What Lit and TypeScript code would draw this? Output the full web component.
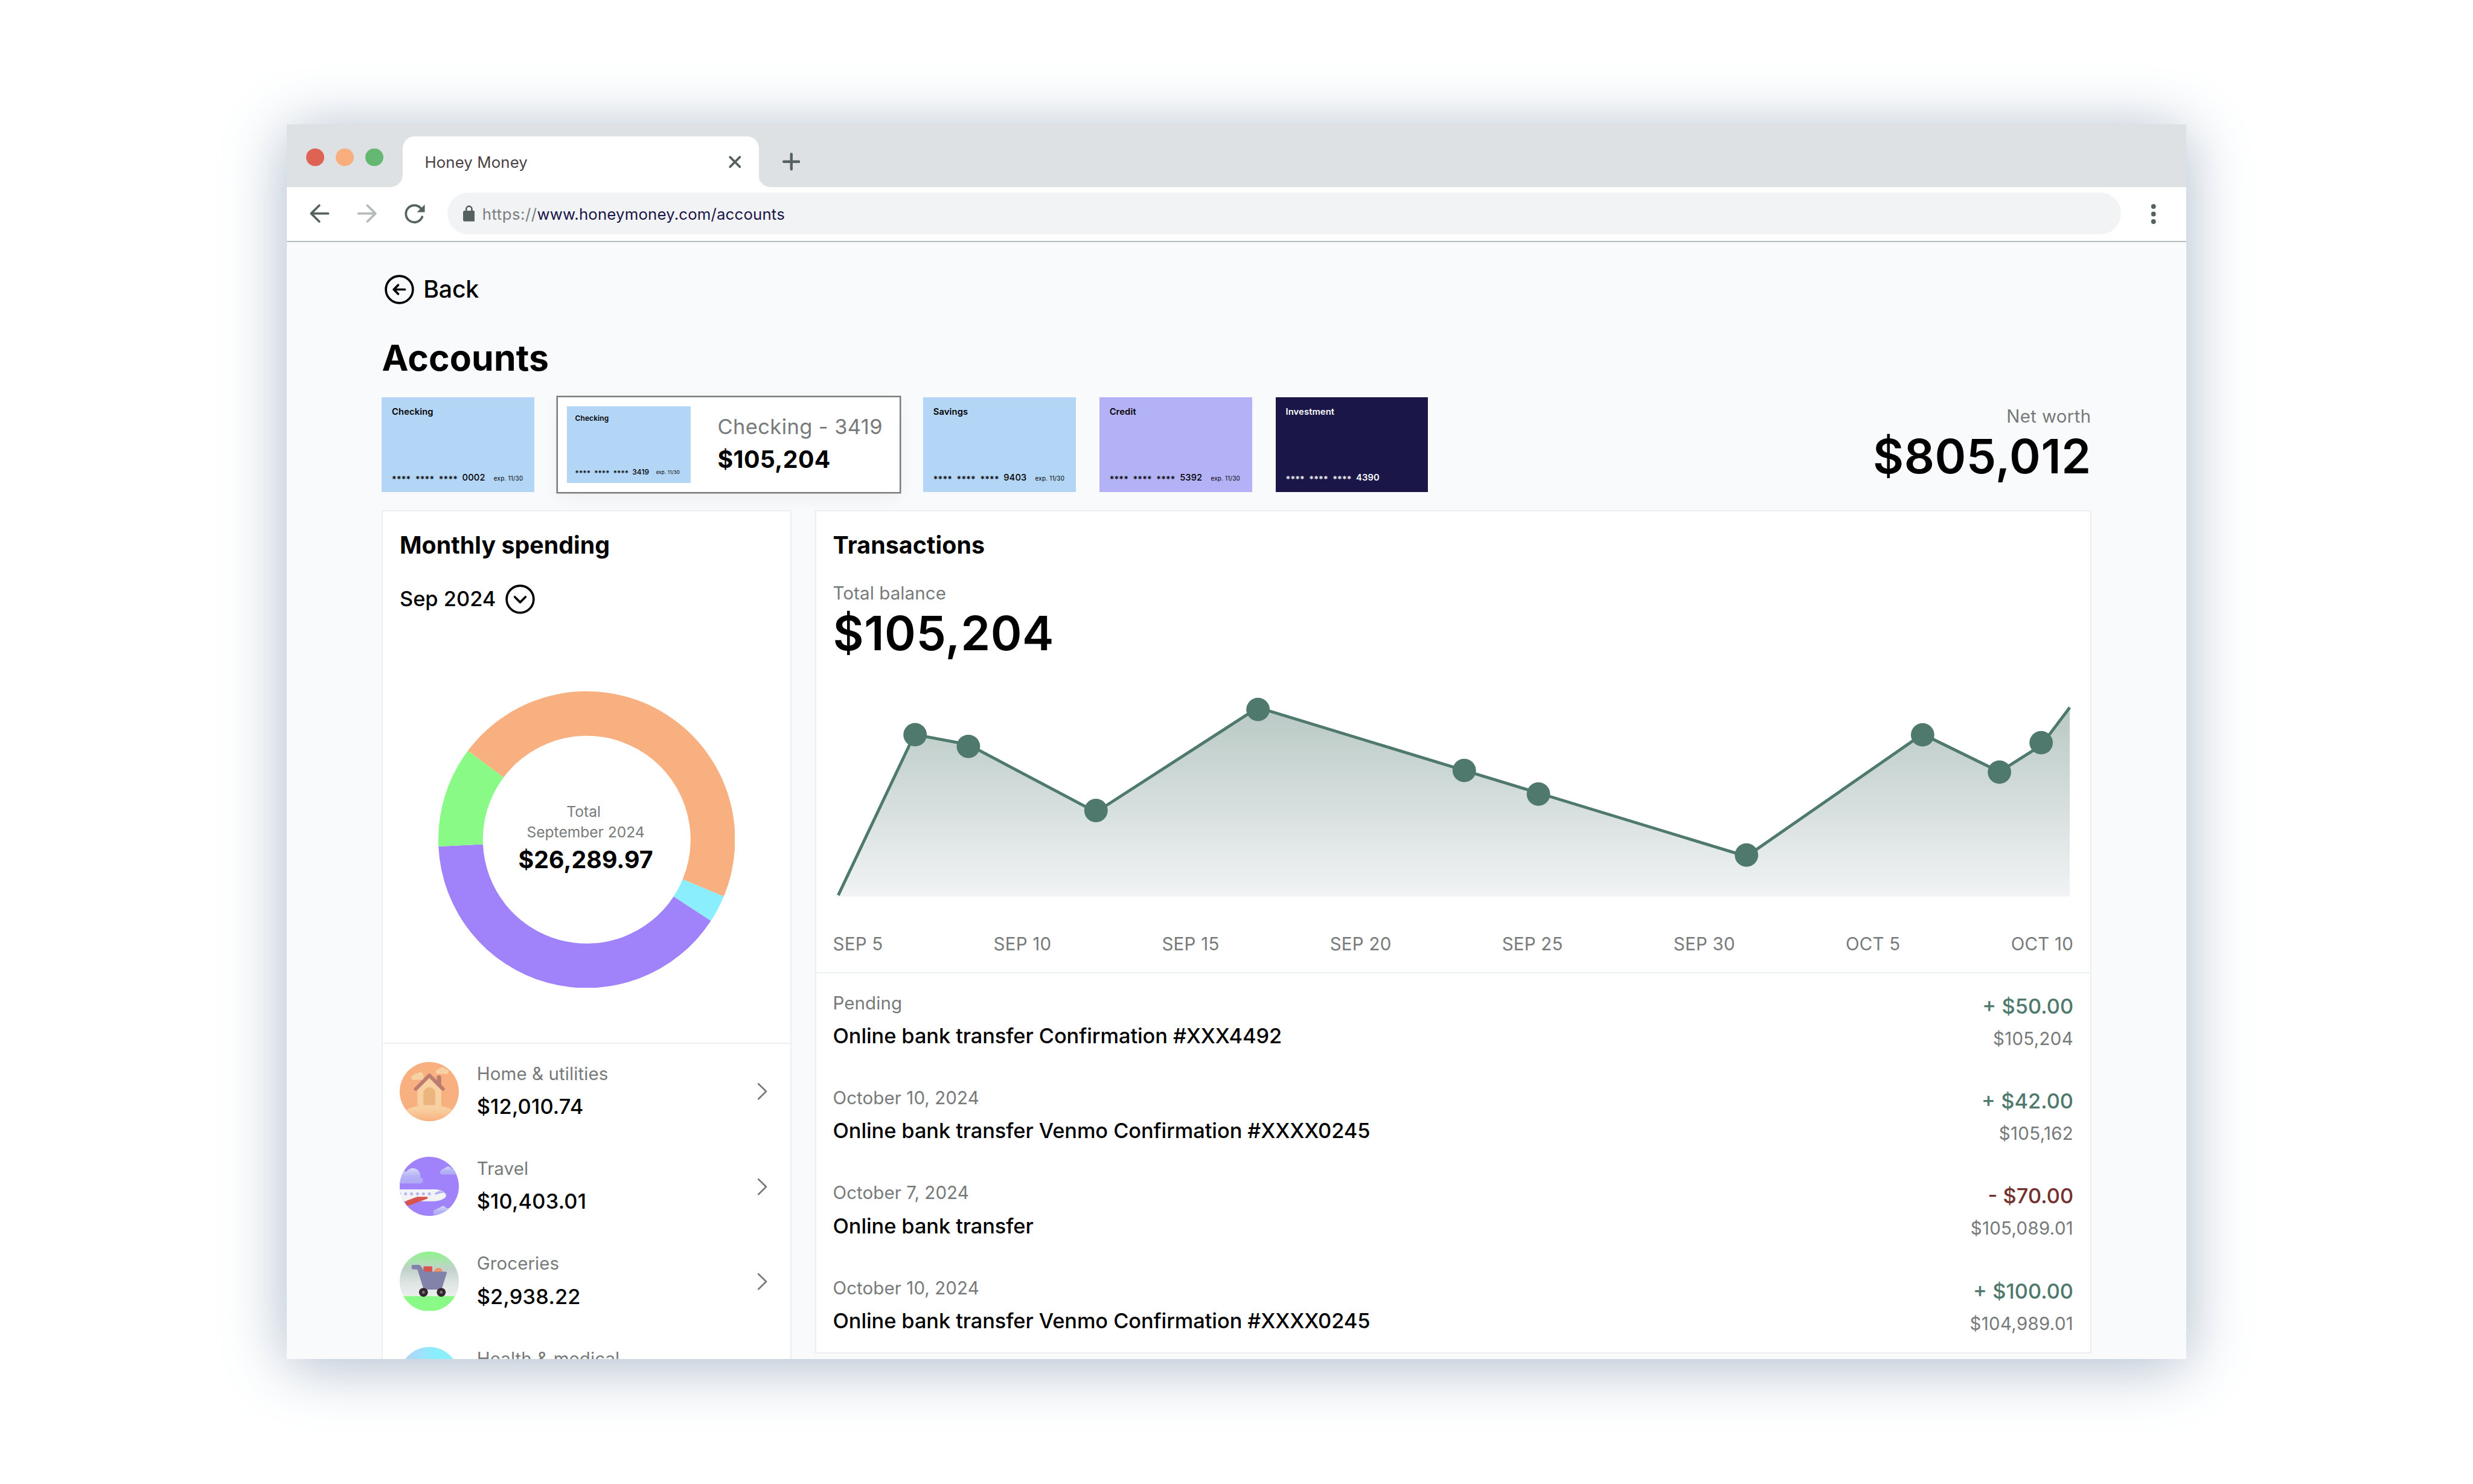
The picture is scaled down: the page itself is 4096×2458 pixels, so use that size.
import { LitElement, html, svg, css } from "lit";
import { customElement, property } from "lit/decorators.js";
import { classMap } from "lit/directives/class-map.js";

interface Account {
  name: string;
  digits: string;
  exp?: string;
  tone: "sky" | "lilac" | "navy";
  selected?: boolean;
  balance?: string;
}

interface Category {
  name: string;
  amount?: string;
  art: "home" | "travel" | "groceries" | "health";
}

interface Transaction {
  date: string;
  title: string;
  amount: string;
  balance: string;
  debit?: boolean;
}

const ACCOUNTS: Account[] = [
  { name: "Checking", digits: "0002", exp: "11/30", tone: "sky" },
  { name: "Checking", digits: "3419", exp: "11/30", tone: "sky", selected: true, balance: "$105,204" },
  { name: "Savings", digits: "9403", exp: "11/30", tone: "sky" },
  { name: "Credit", digits: "5392", exp: "11/30", tone: "lilac" },
  { name: "Investment", digits: "4390", tone: "navy" },
];

const CATEGORIES: Category[] = [
  { name: "Home & utilities", amount: "$12,010.74", art: "home" },
  { name: "Travel", amount: "$10,403.01", art: "travel" },
  { name: "Groceries", amount: "$2,938.22", art: "groceries" },
  { name: "Health & medical", art: "health" },
];

const TRANSACTIONS: Transaction[] = [
  { date: "Pending", title: "Online bank transfer Confirmation #XXX4492", amount: "+ $50.00", balance: "$105,204" },
  { date: "October 10, 2024", title: "Online bank transfer Venmo Confirmation #XXXX0245", amount: "+ $42.00", balance: "$105,162" },
  { date: "October 7, 2024", title: "Online bank transfer", amount: "- $70.00", balance: "$105,089.01", debit: true },
  { date: "October 10, 2024", title: "Online bank transfer Venmo Confirmation #XXXX0245", amount: "+ $100.00", balance: "$104,989.01" },
];

const TICKS = ["SEP 5", "SEP 10", "SEP 15", "SEP 20", "SEP 25", "SEP 30", "OCT 5", "OCT 10"];

/* Ring segments: start and end angle in degrees, clockwise from the top. */
const SEGMENTS: [number, number, string][] = [
  [306.8, 472.5, "#f9b080"],
  [112.5, 123.2, "#8aeefc"],
  [123.2, 267.4, "#a083fa"],
  [267.4, 306.8, "#8afa86"],
];

const LINE: [number, number][] = [
  [3.4, 157.4], [54.8, 49], [91.1, 55.9], [177.1, 101.4], [286.3, 30.9],
  [615.5, 131.2], [734.2, 48.8], [786, 74.2], [814.1, 56.4], [833.4, 30.8],
];

const DOTS: [number, number][] = [
  [55.2, 49.2], [91.1, 57.1], [177.1, 100.3], [286.3, 32.2], [425.3, 73.3],
  [475.3, 89.2], [615.5, 130.3], [734.2, 49.3], [786, 74.4], [814.1, 54.6],
];

function ringSlice(from: number, to: number, outer: number, inner: number): string {
  const at = (deg: number, r: number) => {
    const a = (deg * Math.PI) / 180;
    return `${(100 + r * Math.sin(a)).toFixed(3)} ${(100 - r * Math.cos(a)).toFixed(3)}`;
  };
  const big = to - from > 180 ? 1 : 0;
  return `M${at(from, outer)}A${outer} ${outer} 0 ${big} 1 ${at(to, outer)}L${at(to, inner)}A${inner} ${inner} 0 ${big} 0 ${at(from, inner)}Z`;
}

@customElement("browser-bar")
export class BrowserBar extends LitElement {
  static styles = css`
    :host {
      display: block;
      color: #55625f;
    }
    svg {
      display: block;
    }
    .tabs {
      display: flex;
      height: 42px;
      background: #dee1e4;
    }
    .lights {
      display: flex;
      gap: 8px;
      padding: 16px 13px 0;
      width: 52px;
    }
    .light {
      width: 12px;
      height: 12px;
      border-radius: 50%;
    }
    .red {
      background: #df6354;
    }
    .amber {
      background: #f9ae7d;
    }
    .green {
      background: #64b872;
    }
    .tab {
      position: relative;
      display: flex;
      align-items: center;
      justify-content: space-between;
      box-sizing: border-box;
      width: 240px;
      height: 34px;
      margin-top: 8px;
      padding: 0 11px 0 14.9px;
      border-radius: 8px 8px 0 0;
      background: #fff;
    }
    .tab::before,
    .tab::after {
      content: "";
      position: absolute;
      bottom: 0;
      width: 8px;
      height: 8px;
    }
    .tab::before {
      left: -8px;
      background: radial-gradient(circle at 0 0, transparent 7.9px, #fff 8.1px);
    }
    .tab::after {
      right: -8px;
      background: radial-gradient(circle at 100% 0, transparent 7.9px, #fff 8.1px);
    }
    .title {
      padding-top: 0.3px;
      font-size: 10.5px;
      letter-spacing: 0.0045em;
      line-height: 16px;
      color: #4b4143;
    }
    .plus {
      padding: 19px 0 0 16px;
    }
    .toolbar {
      display: flex;
      align-items: flex-start;
      height: 36.2px;
      border-bottom: 0.9px solid #b5bfbc;
      background: #fff;
    }
    .nav {
      width: 108px;
      height: 36px;
    }
    .address {
      display: flex;
      align-items: center;
      gap: 5px;
      box-sizing: border-box;
      width: 1128px;
      height: 28px;
      margin-top: 4px;
      padding: 0 10.7px;
      border-radius: 14px;
      background: #f1f3f5;
    }
    .url {
      padding-top: 0.3px;
      font-size: 10.5px;
      letter-spacing: 0.006em;
      line-height: 16px;
      color: #1a1648;
    }
    .scheme {
      letter-spacing: 0.018em;
      color: #7b7e7e;
    }
    .more {
      padding: 11.4px 0 0 20.3px;
    }
  `;

  render() {
    return html`
      <div class="tabs">
        <div class="lights">
          <span class="light red"></span><span class="light amber"></span><span class="light green"></span>
        </div>
        <div class="tab">
          <span class="title">Honey Money</span>
          <svg width="10" height="10" viewBox="0 0 10 10" fill="none" stroke="currentColor" stroke-width="1.5" stroke-linecap="round">
            <path d="M1.7 1.7l6.6 6.6M8.3 1.7L1.7 8.3" />
          </svg>
        </div>
        <div class="plus">
          <svg width="12" height="12" viewBox="0 0 12 12" fill="none" stroke="currentColor" stroke-width="1.8" stroke-linecap="round">
            <path d="M6 0.9v10.2M0.9 6h10.2" />
          </svg>
        </div>
      </div>
      <div class="toolbar">
        <svg class="nav" viewBox="0 0 108 36" fill="none" stroke="currentColor" stroke-width="1.5" stroke-linecap="round" stroke-linejoin="round">
          <path d="M27.9 17.75H16.4M21.9 12.3L16.4 17.75L21.9 23.2" />
          <path stroke="#b5bbba" d="M48.3 17.75H59.8M54.3 12.3L59.8 17.75L54.3 23.2" />
          <path d="M91.3 20A5.7 5.7 0 1 1 90.6 14.6" />
          <path fill="currentColor" stroke="none" d="M93 11.7V16.9H87.7Z" />
        </svg>
        <div class="address">
          <svg width="8" height="11" viewBox="0 0 8 11">
            <path fill="none" stroke="currentColor" stroke-width="1.1" d="M2.1 4.2V2.6a1.9 1.9 0 0 1 3.8 0V4.2" />
            <rect y="3.7" width="8" height="7.2" rx="1" fill="currentColor" />
          </svg>
          <span class="url"><span class="scheme">https://</span>www.honeymoney.com/accounts</span>
        </div>
        <svg class="more" width="4" height="13.4" viewBox="0 0 4 13.4" fill="currentColor">
          <circle cx="1.6" cy="1.6" r="1.6" />
          <circle cx="1.6" cy="6.7" r="1.6" />
          <circle cx="1.6" cy="11.8" r="1.6" />
        </svg>
      </div>
    `;
  }
}

@customElement("bank-card")
export class BankCard extends LitElement {
  @property({ attribute: false }) account!: Account;
  @property({ type: Boolean, reflect: true }) small = false;

  static styles = css`
    :host {
      display: block;
      font-size: 6px;
    }
    :host([small]) {
      font-size: 4.875px;
    }
    .card {
      display: flex;
      flex-direction: column;
      justify-content: space-between;
      box-sizing: border-box;
      width: 17.13em;
      height: 10.667em;
      padding: 1.06em 1.13em 0.92em;
      font-weight: 500;
      color: #000;
    }
    .sky {
      background: #b3d5f6;
    }
    .lilac {
      background: #b4b2f6;
    }
    .navy {
      background: #1a1648;
      color: #fff;
    }
    .name {
      font-weight: 600;
      letter-spacing: 0.008em;
      line-height: 1.3em;
    }
    .number {
      display: flex;
      align-items: center;
      line-height: 1.3em;
      letter-spacing: 0.007em;
    }
    .mask {
      width: 2.6333em;
      padding-top: 0.36em;
      line-height: 0.94em;
      letter-spacing: 0.012em;
    }
    .navy .digits {
      font-weight: 600;
    }
    .exp {
      margin-left: 1.45em;
      padding-top: 0.1em;
      font-size: 0.6667em;
      font-weight: 400;
      line-height: 1.3em;
      letter-spacing: 0.022em;
    }
  `;

  render() {
    const a = this.account;
    return html`
      <div class="card ${a.tone}">
        <div class="name">${a.name}</div>
        <div class="number">
          <span class="mask">****</span><span class="mask">****</span><span class="mask">****</span>
          <span class="digits">${a.digits}</span>
          ${a.exp ? html`<span class="exp">exp. ${a.exp}</span>` : null}
        </div>
      </div>
    `;
  }
}

@customElement("category-art")
export class CategoryArt extends LitElement {
  @property() art: Category["art"] = "home";

  static styles = css`
    :host {
      display: block;
      width: 40px;
      height: 40px;
      border-radius: 50%;
      overflow: hidden;
    }
    svg {
      display: block;
    }
  `;

  private home() {
    return svg`
      <defs>
        <linearGradient id="hill" x1="0" y1="0" x2="0" y2="1">
          <stop offset="0.1" stop-color="#f8d1a2" /><stop offset="0.5" stop-color="#f9b080" />
        </linearGradient>
      </defs>
      <rect width="40" height="40" fill="#f9b080" />
      <path fill="#f8d1a2" d="M9.5 12a1.5 1.5 0 0 1-.3-3a2 2 0 0 1 2.6-1.2a2.3 2.3 0 0 1 4.2 1.2V12Z" />
      <path fill="#f8d1a2" d="M25.3 8a1.4 1.4 0 0 1 0-2.7a1.6 1.6 0 0 1 1.6-.8a2.2 2.2 0 0 1 3.9.5a1.5 1.5 0 0 1 1 3Z" />
      <path fill="#bd7c70" d="M25 16V10.5a1.5 1.5 0 0 1 3 0V18Z" />
      <path fill="#f8d1a2" d="M12 29.5V19L20 11L28 19V29.5Z" />
      <path fill="none" stroke="#bd7c70" stroke-width="2.4" stroke-linecap="round" stroke-linejoin="round" d="M10.8 18.2L20 9L29.2 18.2" />
      <path fill="#edb57e" d="M16 29.2V21a4 4 0 0 1 8 0V29.2Z" />
      <clipPath id="ground"><rect y="29" width="40" height="11" /></clipPath>
      <ellipse cx="20" cy="40" rx="22" ry="11" fill="url(#hill)" clip-path="url(#ground)" />
    `;
  }

  private travel() {
    return svg`
      <defs>
        <linearGradient id="cloud" x1="0" y1="0" x2="0" y2="1">
          <stop offset="0" stop-color="#d6d7fa" /><stop offset="0.55" stop-color="#b4b2f6" /><stop offset="1" stop-color="#b0a8f7" />
        </linearGradient>
      </defs>
      <rect width="40" height="40" fill="#a083fa" />
      <path fill="url(#cloud)" d="M0 18V11.5a4 4 0 0 1 4.6-1.4a5 5 0 0 1 9.3 2.6v1.2a2.1 2.1 0 0 1 .2 4.1Z" />
      <path fill="url(#cloud)" d="M28.4 12a1.6 1.6 0 0 1 0-3.1a2 2 0 0 1 2-1.1a2.6 2.6 0 0 1 4.6.5a2 2 0 0 1 2.4 1.5L40 12Z" />
      <path fill="url(#cloud)" d="M24.8 40a1.8 1.8 0 0 1 .4-4.7a1.8 1.8 0 0 1 2-1a2.2 2.2 0 0 1 4 .3H34V40Z" />
      <path fill="#f1f3f5" d="M0 22H24C27.5 22 31.3 24.3 31.3 26C31.3 28.3 26.5 30 22 30H0Z" />
      ${[0, 4, 8, 12, 16, 20].map((x) => svg`<circle cx=${x} cy="25" r="1" fill="#b4b2f6" />`)}
      <path fill="#b4b2f6" d="M24.2 25.5C23.2 25.4 23.7 24.4 24.4 24L26.8 23C28 23 29.2 23.6 30 24.2C28 24.4 26 24.9 24.2 25.5Z" />
      <path fill="#d9534f" d="M11.8 27H18.3A.7 .7 0 0 1 18.6 28.3L6.6 32.8C5 33.3 4 32.3 4 31C4 30 4.5 29.7 5.2 29.4Z" />
    `;
  }

  private groceries() {
    return svg`
      <defs>
        <linearGradient id="sky" x1="0" y1="0" x2="0" y2="1">
          <stop offset="0" stop-color="#8df58a" /><stop offset="0.2" stop-color="#a9e3ac" /><stop offset="0.4" stop-color="#c2d1cc" />
          <stop offset="0.7" stop-color="#dde4e2" /><stop offset="1" stop-color="#ebf0ef" />
        </linearGradient>
      </defs>
      <rect width="40" height="30" fill="url(#sky)" />
      <rect y="30" width="40" height="10" fill="#8afa86" />
      <rect x="16" y="10" width="6" height="5" rx="0.6" fill="#d9534f" />
      <circle cx="26" cy="14" r="3" fill="#ee9068" />
      <path fill="#8183aa" d="M9 9H13C14.8 9 15.5 13.5 17.5 13.5H31C31.7 13.5 31.8 14 31.7 14.5L28.2 25.6H16.2L12.4 13.4C12.2 12.4 11.8 12 11 12H9A1 1 0 0 1 8 11V10A1 1 0 0 1 9 9Z" />
      ${[16, 28].map((x) => svg`<circle cx=${x} cy="27.5" r="3" fill="#33252e" /><circle cx=${x} cy="27.5" r="1" fill="#77797c" />`)}
    `;
  }

  private health() {
    return svg`
      <defs>
        <linearGradient id="wash"><stop offset="0.1" stop-color="#b3d5f6" /><stop offset="0.6" stop-color="#8aeefc" /></linearGradient>
      </defs>
      <rect width="40" height="40" fill="url(#wash)" />
    `;
  }

  render() {
    return html`<svg width="40" height="40" viewBox="0 0 40 40">${this[this.art]()}</svg>`;
  }
}

@customElement("spending-panel")
export class SpendingPanel extends LitElement {
  static styles = css`
    :host {
      display: block;
      box-sizing: border-box;
      width: 276px;
      border: 1px solid #ebefef;
      background: #fff;
    }
    svg {
      display: block;
    }
    .head {
      padding: 11.3px 11.19px 0;
    }
    h2 {
      margin: 0 0 12px;
      font-size: 16px;
      font-weight: 700;
      letter-spacing: 0.001em;
      line-height: 24px;
    }
    .month {
      display: flex;
      align-items: center;
      gap: 4.3px;
      font-size: 14px;
      font-weight: 500;
      line-height: 24px;
    }
    .ring {
      display: grid;
      place-items: center;
      height: 200px;
      margin: 50px 0 36.9px;
    }
    .ring > * {
      grid-area: 1 / 1;
    }
    .total {
      padding: 0.6px 1.2px 0 0;
      text-align: center;
      font-size: 10px;
      line-height: 13.6px;
      color: #777a7a;
    }
    .sum {
      font-size: 16px;
      font-weight: 700;
      line-height: 24px;
      color: #000;
    }
    ul {
      display: flex;
      flex-direction: column;
      gap: 24px;
      margin: 0;
      padding: 12.19px 15.1px 12px 11.19px;
      border-top: 1px solid #ebefef;
      list-style: none;
    }
    li {
      display: flex;
      align-items: center;
      gap: 12px;
    }
    .text {
      display: flex;
      flex: 1;
      flex-direction: column;
      align-self: stretch;
      gap: 4px;
    }
    .name {
      font-size: 12px;
      letter-spacing: 0.003em;
      line-height: 16px;
      color: #777a7a;
    }
    .amount {
      font-size: 14px;
      font-weight: 500;
      letter-spacing: 0.005em;
      line-height: 20px;
    }
  `;

  render() {
    return html`
      <div class="head">
        <h2>Monthly spending</h2>
        <div class="month">
          Sep 2024
          <svg width="24" height="24" viewBox="0 0 24 24" fill="none" stroke="#000" stroke-width="1.5" stroke-linecap="round" stroke-linejoin="round">
            <circle cx="12" cy="12" r="9.1" />
            <path d="M8.4 10.5L12 14.1L15.6 10.5" />
          </svg>
        </div>
      </div>
      <div class="ring">
        <svg width="200" height="200" viewBox="0 0 200 200">
          ${SEGMENTS.map(([from, to, color]) => svg`<path fill=${color} d=${ringSlice(from, to, 100, 70)} />`)}
        </svg>
        <div class="total">
          <div>Total&nbsp;</div>
          <div>September 2024</div>
          <div class="sum">$26,289.97</div>
        </div>
      </div>
      <ul>
        ${CATEGORIES.map(
          (c) => html`
            <li>
              <category-art art=${c.art}></category-art>
              <div class="text">
                <span class="name">${c.name}</span>
                ${c.amount ? html`<span class="amount">${c.amount}</span>` : null}
              </div>
              <svg width="7" height="12" viewBox="0 0 7 12" fill="none" stroke="#777a7a" stroke-width="1.1" stroke-linecap="round" stroke-linejoin="round">
                <path d="M0.9 0.9L6.1 6L0.9 11.1" />
              </svg>
            </li>
          `
        )}
      </ul>
    `;
  }
}

@customElement("transactions-panel")
export class TransactionsPanel extends LitElement {
  static styles = css`
    :host {
      display: block;
      box-sizing: border-box;
      flex: 1;
      border: 1px solid #ebefef;
      background: #fff;
    }
    svg {
      display: block;
    }
    .overview {
      padding: 11.3px 11.19px 11.2px;
      border-bottom: 1px solid #ebefef;
    }
    h2 {
      margin: 0 0 12px;
      font-size: 16px;
      font-weight: 700;
      letter-spacing: 0.0025em;
      line-height: 24px;
    }
    .muted {
      font-size: 12px;
      letter-spacing: 0.003em;
      line-height: 16px;
      color: #777a7a;
    }
    .balance {
      font-size: 32px;
      font-weight: 600;
      letter-spacing: 0.007em;
      line-height: 38px;
    }
    .ticks {
      display: flex;
      justify-content: space-between;
      padding-top: 0.3px;
      letter-spacing: 0.008em;
    }
    .rows {
      display: flex;
      flex-direction: column;
      gap: 24px;
      padding: 12px 11.19px 11.3px;
    }
    .row {
      display: flex;
      justify-content: space-between;
    }
    .left,
    .right {
      display: flex;
      flex-direction: column;
      gap: 4px;
    }
    .right {
      align-items: flex-end;
    }
    .right .muted {
      letter-spacing: 0.01em;
    }
    .strong {
      font-size: 14px;
      font-weight: 500;
      line-height: 20px;
    }
    .left .strong {
      letter-spacing: -0.0025em;
    }
    .credit {
      color: #4f796d;
    }
    .debit {
      color: #74302f;
    }
  `;

  render() {
    const line = LINE.map((p) => p.join(" ")).join("L");
    return html`
      <div class="overview">
        <h2>Transactions</h2>
        <div class="muted">Total balance</div>
        <div class="balance">$105,204</div>
        <svg width="836" height="182" viewBox="0 0 836 182">
          <defs>
            <linearGradient id="fade" gradientUnits="userSpaceOnUse" x1="0" y1="31" x2="0" y2="158">
              <stop offset="0" stop-color="#b9c9c4" />
              <stop offset="1" stop-color="#f1f3f4" />
            </linearGradient>
          </defs>
          <path fill="url(#fade)" d="M${line}V158.3H3.4Z" />
          <path fill="none" stroke="#4f796d" stroke-width="2" d="M${line}" />
          ${DOTS.map(([x, y]) => svg`<circle cx=${x} cy=${y} r="7.9" fill="#4f796d" />`)}
        </svg>
        <div class="ticks muted">${TICKS.map((t) => html`<span>${t}</span>`)}</div>
      </div>
      <div class="rows">
        ${TRANSACTIONS.map(
          (t) => html`
            <div class="row">
              <div class="left">
                <span class="muted">${t.date}</span>
                <span class="strong">${t.title}</span>
              </div>
              <div class="right">
                <span class=${classMap({ strong: true, credit: !t.debit, debit: !!t.debit })}>${t.amount}</span>
                <span class="muted">${t.balance}</span>
              </div>
            </div>
          `
        )}
      </div>
    `;
  }
}

@customElement("app-root")
export class AppRoot extends LitElement {
  static styles = css`
    :host {
      display: block;
      overflow: hidden;
      background: #fff;
      font-family: Inter, "Liberation Sans", sans-serif;
      color: #000;
    }
    svg {
      display: block;
    }
    .stage {
      zoom: 2.4576;
      display: flex;
      align-items: center;
      justify-content: center;
      width: 1666.667px;
      height: 1000px;
    }
    .window {
      display: flex;
      flex-direction: column;
      width: 1280px;
      height: 832px;
      overflow: hidden;
      background: #f9fafc;
      box-shadow: 0 4px 40px #aab9ca;
    }
    main {
      padding: 20px 64px 0;
    }
    .back {
      display: flex;
      align-items: center;
      gap: 4px;
      font-size: 16px;
      font-weight: 500;
      letter-spacing: -0.006em;
      line-height: 24px;
    }
    h1 {
      margin: 19.67px 0 12px;
      font-size: 24px;
      font-weight: 700;
      letter-spacing: 0.002em;
      line-height: 29px;
    }
    .accounts {
      display: flex;
      align-items: center;
      gap: 16px;
      height: 64px;
      margin-bottom: 12px;
    }
    .selected {
      display: flex;
      align-items: center;
      gap: 18px;
      box-sizing: border-box;
      height: 64px;
      padding: 0 11.3px 0 6px;
      background: #fff;
      box-shadow: 0 0 0 1px #777a7a, 0 4px 12px rgba(0, 0, 0, 0.05);
    }
    .caption {
      font-size: 14px;
      letter-spacing: 0.0125em;
      line-height: 20px;
      color: #777a7a;
    }
    .amount {
      font-size: 16px;
      font-weight: 700;
      letter-spacing: 0.009em;
      line-height: 24px;
    }
    .worth {
      margin-left: auto;
      text-align: right;
    }
    .label {
      font-size: 12px;
      letter-spacing: 0.012em;
      line-height: 16px;
      color: #777a7a;
    }
    .net {
      font-size: 32px;
      font-weight: 600;
      letter-spacing: 0.0058em;
      line-height: 38px;
    }
    .panels {
      display: flex;
      align-items: flex-start;
      gap: 16px;
    }
  `;

  private account(a: Account) {
    if (!a.selected) return html`<bank-card .account=${a}></bank-card>`;
    return html`
      <div class="selected">
        <bank-card small .account=${a}></bank-card>
        <div>
          <div class="caption">${a.name} - ${a.digits}</div>
          <div class="amount">${a.balance}</div>
        </div>
      </div>
    `;
  }

  render() {
    return html`
      <div class="stage">
        <div class="window">
          <browser-bar></browser-bar>
          <main>
            <div class="back">
              <svg width="24" height="24" viewBox="0 0 24 24" fill="none" stroke="#000" stroke-width="1.5" stroke-linecap="round" stroke-linejoin="round">
                <circle cx="12" cy="12" r="9.1" />
                <path d="M15.7 12H8.2M11.2 9L8.2 12L11.2 15" />
              </svg>
              Back
            </div>
            <h1>Accounts</h1>
            <div class="accounts">
              ${ACCOUNTS.map((a) => this.account(a))}
              <div class="worth">
                <div class="label">Net worth</div>
                <div class="net">$805,012</div>
              </div>
            </div>
            <div class="panels">
              <spending-panel></spending-panel>
              <transactions-panel></transactions-panel>
            </div>
          </main>
        </div>
      </div>
    `;
  }
}
